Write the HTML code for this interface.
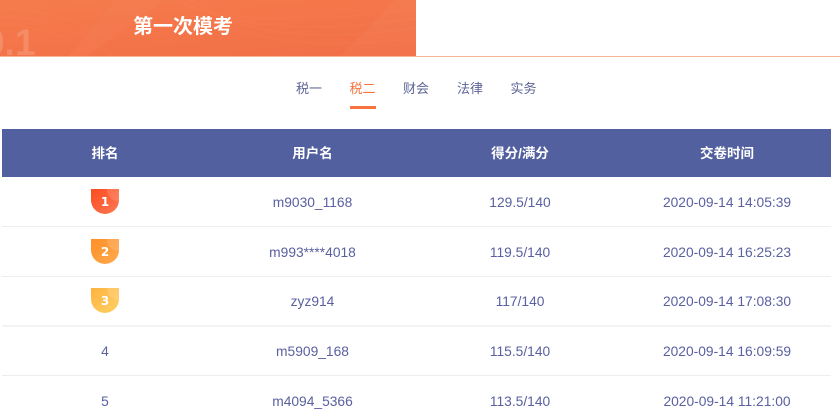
<!DOCTYPE html>
<html lang="zh">
<head>
<meta charset="utf-8">
<style>
html,body{margin:0;padding:0;background:#fff}
body{width:840px;height:420px;overflow:hidden;position:relative;font-family:"Liberation Sans","Noto Sans CJK SC",sans-serif;color:#585f9f}
.a{position:absolute}
.c{position:absolute;text-align:center;white-space:nowrap;transform:translateX(-50%)}
.tab{top:81px;font-size:13px;line-height:16px;color:#5d6496}
.th{top:145px;font-size:13.5px;line-height:17px;font-weight:700;color:#fff}
.td{font-size:13.8px;line-height:18px;color:#5a60a0}
.line{position:absolute;left:2px;width:829px;height:1px;background:#eeeeee}
</style>
</head>
<body>
<div class="a" style="left:0;top:0;width:416px;height:57px;overflow:hidden;background:linear-gradient(175deg,#f57b4c,#f26f47)">
<svg class="a" style="left:0;top:0" width="416" height="57" viewBox="0 0 416 57" fill="none">
<polygon points="68,57 115,0 165,0 85,57" fill="#f9a27c" opacity=".08"/>
<polygon points="340,57 395,0 416,0 416,57" fill="#f8a07c" opacity=".1"/>
<g stroke="#ffb497" stroke-width=".5" opacity=".12">
<path d="M0 8C60 10 110 30 130 57"/><path d="M0 16C50 18 95 36 112 57"/><path d="M0 24C40 26 78 40 94 57"/>
<path d="M170 0C220 20 300 26 416 8"/><path d="M180 0C230 28 310 34 416 18"/><path d="M190 0C240 36 320 42 416 28"/><path d="M200 12C250 44 330 50 416 38"/>
</g>
<text x="-16" y="55" font-family="Liberation Sans" font-weight="700" font-size="37" fill="#f9b094" opacity=".38">0.1</text>
</svg>
<div class="c" style="left:183px;top:14px;font-size:20px;line-height:26px;font-weight:700;color:#fff">第一次模考</div>
</div>
<div class="a" style="left:0;top:56px;width:840px;height:1px;background:#f9b396"></div>

<div class="c tab" style="left:309px">税一</div>
<div class="c tab" style="left:362.5px;color:#f4733f">税二</div>
<div class="c tab" style="left:416px">财会</div>
<div class="c tab" style="left:470px">法律</div>
<div class="c tab" style="left:523.5px">实务</div>
<div class="a" style="left:350px;top:106px;width:26px;height:3px;background:#f7743f"></div>

<div class="a" style="left:2px;top:129px;width:829px;height:48px;background:#52609f"></div>
<div class="c th" style="left:105px">排名</div>
<div class="c th" style="left:312.5px">用户名</div>
<div class="c th" style="left:520px">得分/满分</div>
<div class="c th" style="left:727px">交卷时间</div>

<div class="line" style="top:226px"></div>
<div class="line" style="top:276px"></div>
<div class="line" style="top:325px;height:2px;background:#f3f3f3"></div>
<div class="line" style="top:375px"></div>

<svg class="a" style="left:91px;top:189px" width="28" height="25" viewBox="0 0 28 25">
<defs><linearGradient id="g1" x1="0" y1="0" x2="1" y2="1"><stop offset="0" stop-color="#fb4a1f"/><stop offset="1" stop-color="#fd7a55"/></linearGradient></defs>
<path d="M0 0H28V11A14 14 0 0 1 0 11Z" fill="url(#g1)"/><path d="M16 0H28V11A14 14 0 0 1 26 12A12 12 0 0 1 16 0Z" fill="#fff" opacity=".14"/>
<text x="14" y="17" text-anchor="middle" font-family="DejaVu Sans" font-size="12" font-weight="700" fill="#fff">1</text></svg>
<svg class="a" style="left:91px;top:239px" width="28" height="25" viewBox="0 0 28 25">
<defs><linearGradient id="g2" x1="0" y1="0" x2="1" y2="1"><stop offset="0" stop-color="#fe8f27"/><stop offset="1" stop-color="#ffaa4e"/></linearGradient></defs>
<path d="M0 0H28V11A14 14 0 0 1 0 11Z" fill="url(#g2)"/><path d="M16 0H28V11A14 14 0 0 1 26 12A12 12 0 0 1 16 0Z" fill="#fff" opacity=".14"/>
<text x="14" y="17" text-anchor="middle" font-family="DejaVu Sans" font-size="12" font-weight="700" fill="#fff">2</text></svg>
<svg class="a" style="left:91px;top:288px" width="28" height="25" viewBox="0 0 28 25">
<defs><linearGradient id="g3" x1="0" y1="0" x2="1" y2="1"><stop offset="0" stop-color="#feb33f"/><stop offset="1" stop-color="#ffd066"/></linearGradient></defs>
<path d="M0 0H28V11A14 14 0 0 1 0 11Z" fill="url(#g3)"/><path d="M16 0H28V11A14 14 0 0 1 26 12A12 12 0 0 1 16 0Z" fill="#fff" opacity=".14"/>
<text x="14" y="17" text-anchor="middle" font-family="DejaVu Sans" font-size="12" font-weight="700" fill="#fff">3</text></svg>

<div class="c td" style="left:312.5px;top:194px">m9030_1168</div>
<div class="c td" style="left:520px;top:194px">129.5/140</div>
<div class="c td" style="left:727px;top:194px">2020-09-14 14:05:39</div>

<div class="c td" style="left:312.5px;top:244px">m993****4018</div>
<div class="c td" style="left:520px;top:244px">119.5/140</div>
<div class="c td" style="left:727px;top:244px">2020-09-14 16:25:23</div>

<div class="c td" style="left:312.5px;top:293px">zyz914</div>
<div class="c td" style="left:520px;top:293px">117/140</div>
<div class="c td" style="left:727px;top:293px">2020-09-14 17:08:30</div>

<div class="c td" style="left:105px;top:343px">4</div>
<div class="c td" style="left:312.5px;top:343px">m5909_168</div>
<div class="c td" style="left:520px;top:343px">115.5/140</div>
<div class="c td" style="left:727px;top:343px">2020-09-14 16:09:59</div>

<div class="c td" style="left:105px;top:393px">5</div>
<div class="c td" style="left:312.5px;top:393px">m4094_5366</div>
<div class="c td" style="left:520px;top:393px">113.5/140</div>
<div class="c td" style="left:727px;top:393px">2020-09-14 11:21:00</div>
</body>
</html>
